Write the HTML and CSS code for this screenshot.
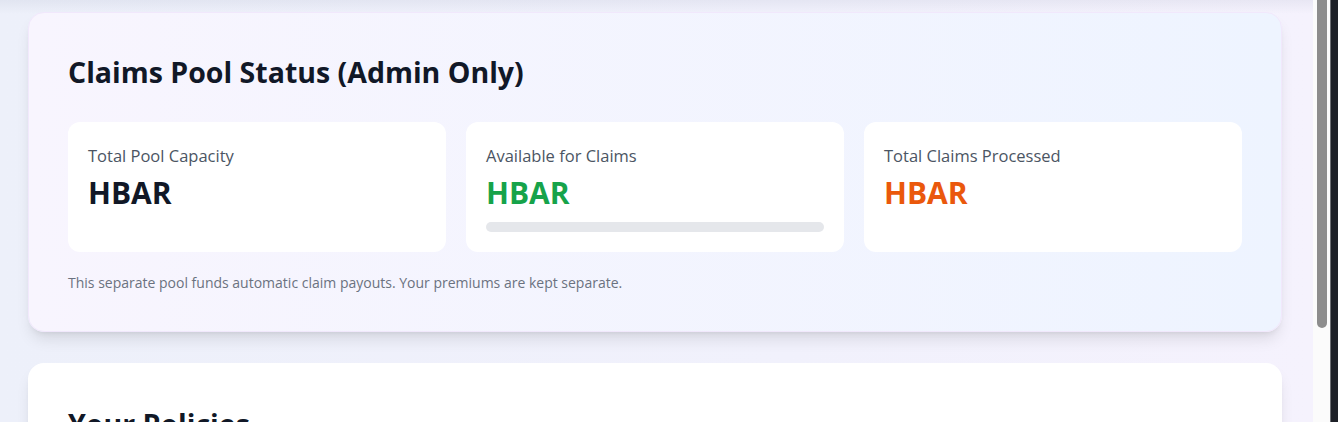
FILE: index.html
```html
<!DOCTYPE html>
<html lang="en">
<head>
<meta charset="utf-8">
<title>Claims Pool Status</title>
<link rel="stylesheet" href="styles.css">
</head>
<body>
<div class="window">
  <main class="page">
    <section class="card pool">
      <h2 class="card-title">Claims Pool Status (Admin Only)</h2>
      <div class="stats">
        <div class="stat">
          <div class="stat-label">Total Pool Capacity</div>
          <div class="stat-value dark">HBAR</div>
        </div>
        <div class="stat">
          <div class="stat-label">Available for Claims</div>
          <div class="stat-value green">HBAR</div>
          <div class="bar"><div class="bar-fill" style="width:0%"></div></div>
        </div>
        <div class="stat">
          <div class="stat-label">Total Claims Processed</div>
          <div class="stat-value orange">HBAR</div>
        </div>
      </div>
      <p class="note">This separate pool funds automatic claim payouts. Your premiums are kept separate.</p>
    </section>
    <section class="card policies">
      <h2 class="card-title">Your Policies</h2>
    </section>
  </main>
  <div class="scrollbar"><div class="thumb"></div></div>
  <div class="edge"></div>
</div>
</body>
</html>
```
FILE: styles.css
```css
html, body {
  margin: 0;
  padding: 0;
  height: 100%;
  overflow: hidden;
}
body {
  font-family: "Open Sans", "Noto Sans", sans-serif;
  color: #111827;
}
.window {
  display: flex;
  height: 422px;
  width: 1338px;
}
.page {
  width: 1313px;
  flex: none;
  box-sizing: border-box;
  padding: 12px 31px 0 28px;
  background:
    linear-gradient(to bottom, rgba(120,130,160,0.10), rgba(120,130,160,0) 14px),
    linear-gradient(to right, #edf0fa, #f1f1fc 60%, #f5f2fd);
  overflow: hidden;
}
.card {
  border-radius: 16px;
  box-shadow: 0 10px 15px -3px rgba(0,0,0,0.10), 0 4px 6px -4px rgba(0,0,0,0.10);
  box-sizing: border-box;
  padding: 43px 40px 40px;
}
.pool {
  background: linear-gradient(to right, #f8f5fe, #eef4ff);
  border: 1px solid #f1e8fc;
  padding: 41px 39px 39px;
  height: 320px;
}
.policies {
  margin-top: 31px;
  background: #fff;
  height: 200px;
}
.card-title {
  margin: 0 0 32px;
  font-size: 28.5px;
  line-height: 36px;
  font-weight: 700;
  color: #111827;
}
.stats {
  display: grid;
  grid-template-columns: repeat(3, 1fr);
  gap: 20px;
}
.stat {
  background: #fff;
  border-radius: 12px;
  padding: 22px 20px 20px;
  height: 130px;
  box-sizing: border-box;
}
.stat-label {
  font-size: 16.5px;
  line-height: 24px;
  color: #4b5563;
}
.stat-value {
  margin-top: 7px;
  font-size: 30px;
  line-height: 36px;
  font-weight: 700;
}
.dark { color: #111827; }
.green { color: #16a34a; }
.orange { color: #ea580c; }
.bar {
  margin-top: 11px;
  height: 10px;
  border-radius: 999px;
  background: #e5e7eb;
  overflow: hidden;
}
.bar-fill {
  height: 100%;
  background: #16a34a;
}
.note {
  margin: 21px 0 0;
  font-size: 14px;
  line-height: 20px;
  color: #6b7280;
}
.scrollbar {
  width: 17px;
  flex: none;
  background: #fbfbfb;
  box-sizing: border-box;
  padding: 0 3px 0 4px;
}
.thumb {
  height: 328px;
  background: #8d8d8d;
  border-radius: 0 0 5px 5px;
}
.edge {
  flex: 1;
  background: #1d2027;
  border-left: 1px solid #6b6d72;
}
```
